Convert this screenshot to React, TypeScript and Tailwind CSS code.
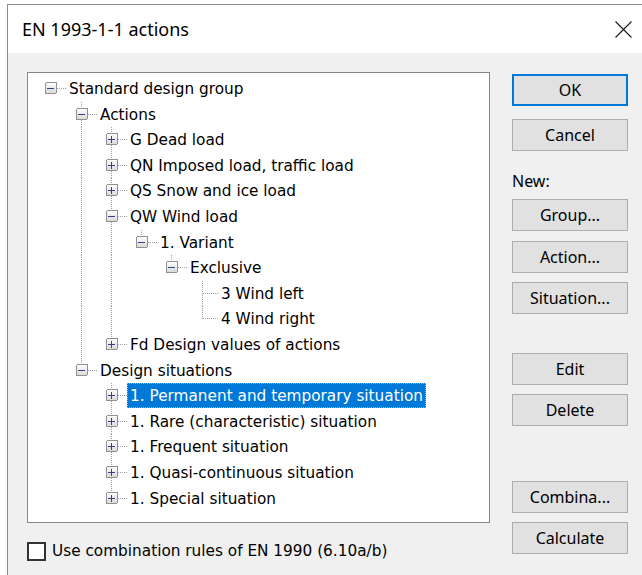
import React from "react";

type TreeNode = {
  label: string;
  open?: boolean;
  more?: boolean; // collapsed node that still has children
  selected?: boolean;
  children?: TreeNode[];
};

type Row = {
  label: string;
  level: number;
  expander: "plus" | "minus" | null;
  last: boolean;
  guides: boolean[];
  selected: boolean;
};

const tree: TreeNode = {
  label: "Standard design group",
  open: true,
  children: [
    {
      label: "Actions",
      open: true,
      children: [
        { label: "G Dead load", more: true },
        { label: "QN Imposed load, traffic load", more: true },
        { label: "QS Snow and ice load", more: true },
        {
          label: "QW Wind load",
          open: true,
          children: [
            {
              label: "1. Variant",
              open: true,
              children: [
                {
                  label: "Exclusive",
                  open: true,
                  children: [{ label: "3 Wind left" }, { label: "4 Wind right" }],
                },
              ],
            },
          ],
        },
        { label: "Fd Design values of actions", more: true },
      ],
    },
    {
      label: "Design situations",
      open: true,
      children: [
        { label: "1. Permanent and temporary situation", more: true, selected: true },
        { label: "1. Rare (characteristic) situation", more: true },
        { label: "1. Frequent situation", more: true },
        { label: "1. Quasi-continuous situation", more: true },
        { label: "1. Special situation", more: true },
      ],
    },
  ],
};

function flatten(node: TreeNode, level: number, guides: boolean[], last: boolean, out: Row[]) {
  const hasKids = !!node.children?.length || !!node.more;
  out.push({
    label: node.label,
    level,
    expander: hasKids ? (node.open ? "minus" : "plus") : null,
    last,
    guides,
    selected: !!node.selected,
  });
  if (node.open && node.children) {
    const next = level >= 1 ? [...guides, !last] : guides;
    node.children.forEach((c, i) => flatten(c, level + 1, next, i === node.children!.length - 1, out));
  }
}

const rows: Row[] = [];
flatten(tree, 0, [], true, rows);

// expander column centres inside the tree box, per level
const COL = [22, 53, 83, 113, 143, 174];
const ROW_PITCH = 25.6;

function Gutter({ row, h }: { row: Row; h: number }) {
  const cx = COL[row.level];
  const w = cx + 16;
  const mid = 12.5;
  const x = (c: number) => c + 0.5;
  const dots = { stroke: "#a0a0a0", strokeWidth: 1, strokeDasharray: "1 1" };

  return (
    <svg width={w} height={h} className="shrink-0" shapeRendering="crispEdges">
      <defs>
        <linearGradient id="exp" x1="0" y1="0" x2="0" y2="1">
          <stop offset="0" stopColor="#ffffff" />
          <stop offset="1" stopColor="#d8d8d8" />
        </linearGradient>
      </defs>
      {row.guides.map((on, i) =>
        on ? <line key={i} x1={x(COL[i + 1])} y1={0} x2={x(COL[i + 1])} y2={h} {...dots} /> : null
      )}
      {row.level >= 1 && (
        <line x1={x(cx)} y1={0} x2={x(cx)} y2={row.last ? mid : h} {...dots} />
      )}
      <line x1={cx + 1} y1={mid} x2={cx + 16} y2={mid} {...dots} />
      {row.expander && (
        <g>
          <rect x={cx - 5 + 0.5} y={mid - 6} width={11} height={11} rx={1.5} fill="url(#exp)" stroke="#919191" />
          <line x1={cx - 3} y1={mid} x2={cx + 4} y2={mid} stroke="#2f4488" strokeWidth={1} />
          {row.expander === "plus" && (
            <line x1={x(cx)} y1={mid - 4} x2={x(cx)} y2={mid + 3.5} stroke="#2f4488" strokeWidth={1} />
          )}
        </g>
      )}
    </svg>
  );
}

function TreeRow({ row, index }: { row: Row; index: number }) {
  const h = Math.round(ROW_PITCH * (index + 1)) - Math.round(ROW_PITCH * index);
  return (
    <div className="flex items-start" style={{ height: h }}>
      <Gutter row={row} h={h} />
      <span
        className={
          row.selected
            ? "h-[25px] px-[2px] pt-[1px] flex items-center whitespace-nowrap border border-dotted border-[#f4a04a] bg-[#0078d7] text-white"
            : "h-[25px] px-[2px] pt-[1px] flex items-center whitespace-nowrap border border-transparent text-black"
        }
      >
        {row.label}
      </span>
    </div>
  );
}

function Btn({ children, primary, className = "" }: { children: React.ReactNode; primary?: boolean; className?: string }) {
  return (
    <button
      className={`w-[116px] h-[32px] flex items-center justify-center bg-[#e1e1e1] text-black text-[16px] ${
        primary ? "border-2 border-[#0078d7]" : "border border-[#adadad]"
      } ${className}`}
    >
      {children}
    </button>
  );
}

export default function App() {
  return (
    <div className="w-[642px] h-[575px] bg-white overflow-hidden pl-[7px] pt-[4px] font-['Noto_Sans',sans-serif]">
      <div className="h-full border-l border-t border-[#8c8c8c] flex flex-col">
        <div className="h-[48px] shrink-0 bg-white flex items-center justify-between pl-[14px] pr-[10px]">
          <span className="text-[18px] text-black">EN 1993-1-1 actions</span>
          <svg width="17" height="17" viewBox="0 0 17 17">
            <path d="M0.5 0.5 L16.5 16.5 M16.5 0.5 L0.5 16.5" stroke="#1a1a1a" strokeWidth="1.1" />
          </svg>
        </div>

        <div className="flex-1 bg-[#f0f0f0] flex pl-[19px] pt-[19px]">
          <div className="w-[463px] shrink-0">
            <div className="h-[451px] border border-[#828790] bg-white pt-[3px] overflow-hidden font-['DejaVu_Sans',sans-serif] text-[15.3px]">
              {rows.map((r, i) => (
                <TreeRow key={i} row={r} index={i} />
              ))}
            </div>
            <label className="mt-[17px] flex items-center gap-[6px] font-['DejaVu_Sans',sans-serif] text-[15.3px] text-black">
              <span className="w-[19px] h-[19px] border-2 border-[#333333] bg-white shrink-0" />
              Use combination rules of EN 1990 (6.10a/b)
            </label>
          </div>

          <div className="ml-[22px] mt-[2px] flex flex-col">
            <Btn primary>OK</Btn>
            <Btn className="mt-[13px]">Cancel</Btn>
            <div className="mt-[19px] h-[23px] leading-[23px] text-[16px] text-black">New:</div>
            <Btn className="mt-[6px]">Group...</Btn>
            <Btn className="mt-[10px]">Action...</Btn>
            <Btn className="mt-[9px]">Situation...</Btn>
            <Btn className="mt-[39px]">Edit</Btn>
            <Btn className="mt-[9px]">Delete</Btn>
            <Btn className="mt-[55px]">Combina...</Btn>
            <Btn className="mt-[9px]">Calculate</Btn>
          </div>
        </div>
      </div>
    </div>
  );
}
